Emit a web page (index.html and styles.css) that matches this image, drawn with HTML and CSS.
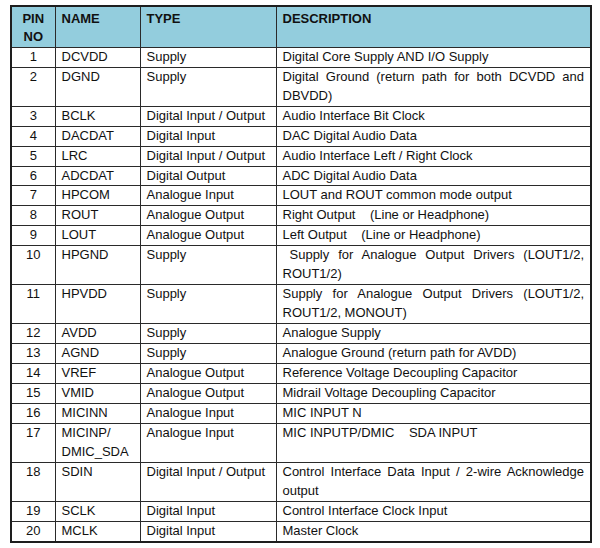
FILE: index.html
```html
<!DOCTYPE html>
<html>
<head>
<meta charset="utf-8">
<title>Pin Description</title>
<link rel="stylesheet" href="styles.css">
</head>
<body>
<div class="page">
<table class="pins">
<colgroup>
<col class="c-pin"><col class="c-name"><col class="c-type"><col class="c-desc">
</colgroup>
<thead>
<tr><th class="pin">PIN<br>NO</th><th>NAME</th><th>TYPE</th><th>DESCRIPTION</th></tr>
</thead>
<tbody>
<tr><td class="pin">1</td><td>DCVDD</td><td>Supply</td><td class="desc">Digital Core Supply AND I/O Supply</td></tr>
<tr><td class="pin">2</td><td>DGND</td><td>Supply</td><td class="desc">Digital Ground (return path for both DCVDD and DBVDD)</td></tr>
<tr><td class="pin">3</td><td>BCLK</td><td>Digital Input / Output</td><td class="desc">Audio Interface Bit Clock</td></tr>
<tr><td class="pin">4</td><td>DACDAT</td><td>Digital Input</td><td class="desc">DAC Digital Audio Data</td></tr>
<tr><td class="pin">5</td><td>LRC</td><td>Digital Input / Output</td><td class="desc">Audio Interface Left / Right Clock</td></tr>
<tr><td class="pin">6</td><td>ADCDAT</td><td>Digital Output</td><td class="desc">ADC Digital Audio Data</td></tr>
<tr><td class="pin">7</td><td>HPCOM</td><td>Analogue Input</td><td class="desc">LOUT and ROUT common mode output</td></tr>
<tr><td class="pin">8</td><td>ROUT</td><td>Analogue Output</td><td class="desc">Right Output&nbsp;&nbsp;&nbsp; (Line or Headphone)</td></tr>
<tr><td class="pin">9</td><td>LOUT</td><td>Analogue Output</td><td class="desc">Left Output&nbsp;&nbsp;&nbsp; (Line or Headphone)</td></tr>
<tr><td class="pin">10</td><td>HPGND</td><td>Supply</td><td class="desc indent">Supply for Analogue Output Drivers (LOUT1/2, ROUT1/2)</td></tr>
<tr><td class="pin">11</td><td>HPVDD</td><td>Supply</td><td class="desc">Supply for Analogue Output Drivers (LOUT1/2, ROUT1/2, MONOUT)</td></tr>
<tr><td class="pin">12</td><td>AVDD</td><td>Supply</td><td class="desc">Analogue Supply</td></tr>
<tr><td class="pin">13</td><td>AGND</td><td>Supply</td><td class="desc">Analogue Ground (return path for AVDD)</td></tr>
<tr><td class="pin">14</td><td>VREF</td><td>Analogue Output</td><td class="desc">Reference Voltage Decoupling Capacitor</td></tr>
<tr><td class="pin">15</td><td>VMID</td><td>Analogue Output</td><td class="desc">Midrail Voltage Decoupling Capacitor</td></tr>
<tr><td class="pin">16</td><td>MICINN</td><td>Analogue Input</td><td class="desc">MIC INPUT N</td></tr>
<tr><td class="pin">17</td><td>MICINP/<br>DMIC_SDA</td><td>Analogue Input</td><td class="desc">MIC INPUTP/DMIC&nbsp;&nbsp;&nbsp; SDA INPUT</td></tr>
<tr><td class="pin">18</td><td>SDIN</td><td>Digital Input / Output</td><td class="desc">Control Interface Data Input / 2-wire Acknowledge output</td></tr>
<tr><td class="pin">19</td><td>SCLK</td><td>Digital Input</td><td class="desc">Control Interface Clock Input</td></tr>
<tr><td class="pin">20</td><td>MCLK</td><td>Digital Input</td><td class="desc">Master Clock</td></tr>
</tbody>
</table>
</div>
</body>
</html>
```

FILE: styles.css
```css
html, body {
  margin: 0;
  padding: 0;
  background: #ffffff;
}

.page {
  padding: 5px 0 0 10px;
}

.pins {
  border-collapse: collapse;
  table-layout: fixed;
  width: 580px;
  font-family: "Liberation Sans", Arial, sans-serif;
  font-size: 13px;
  color: #111111;
  border: 2px solid #1e1e1e;
}

.c-pin { width: 44px; }
.c-name { width: 85px; }
.c-type { width: 136px; }
.c-desc { width: 315px; }

.pins th,
.pins td {
  border: 1px solid #2a2a2a;
  padding: 0 6px;
  line-height: 18.95px;
  vertical-align: top;
  text-align: left;
  white-space: normal;
}

.pins th {
  background: #93cddd;
  font-weight: bold;
  color: #111111;
  line-height: 18.4px;
  padding-top: 3px;
  padding-bottom: 0;
}

.pins .pin {
  text-align: center;
  padding: 0 2px;
}

.pins th.pin {
  padding-top: 3px;
}

.pins td.desc {
  text-align: justify;
}

.pins td.indent {
  text-indent: 7px;
}
```
